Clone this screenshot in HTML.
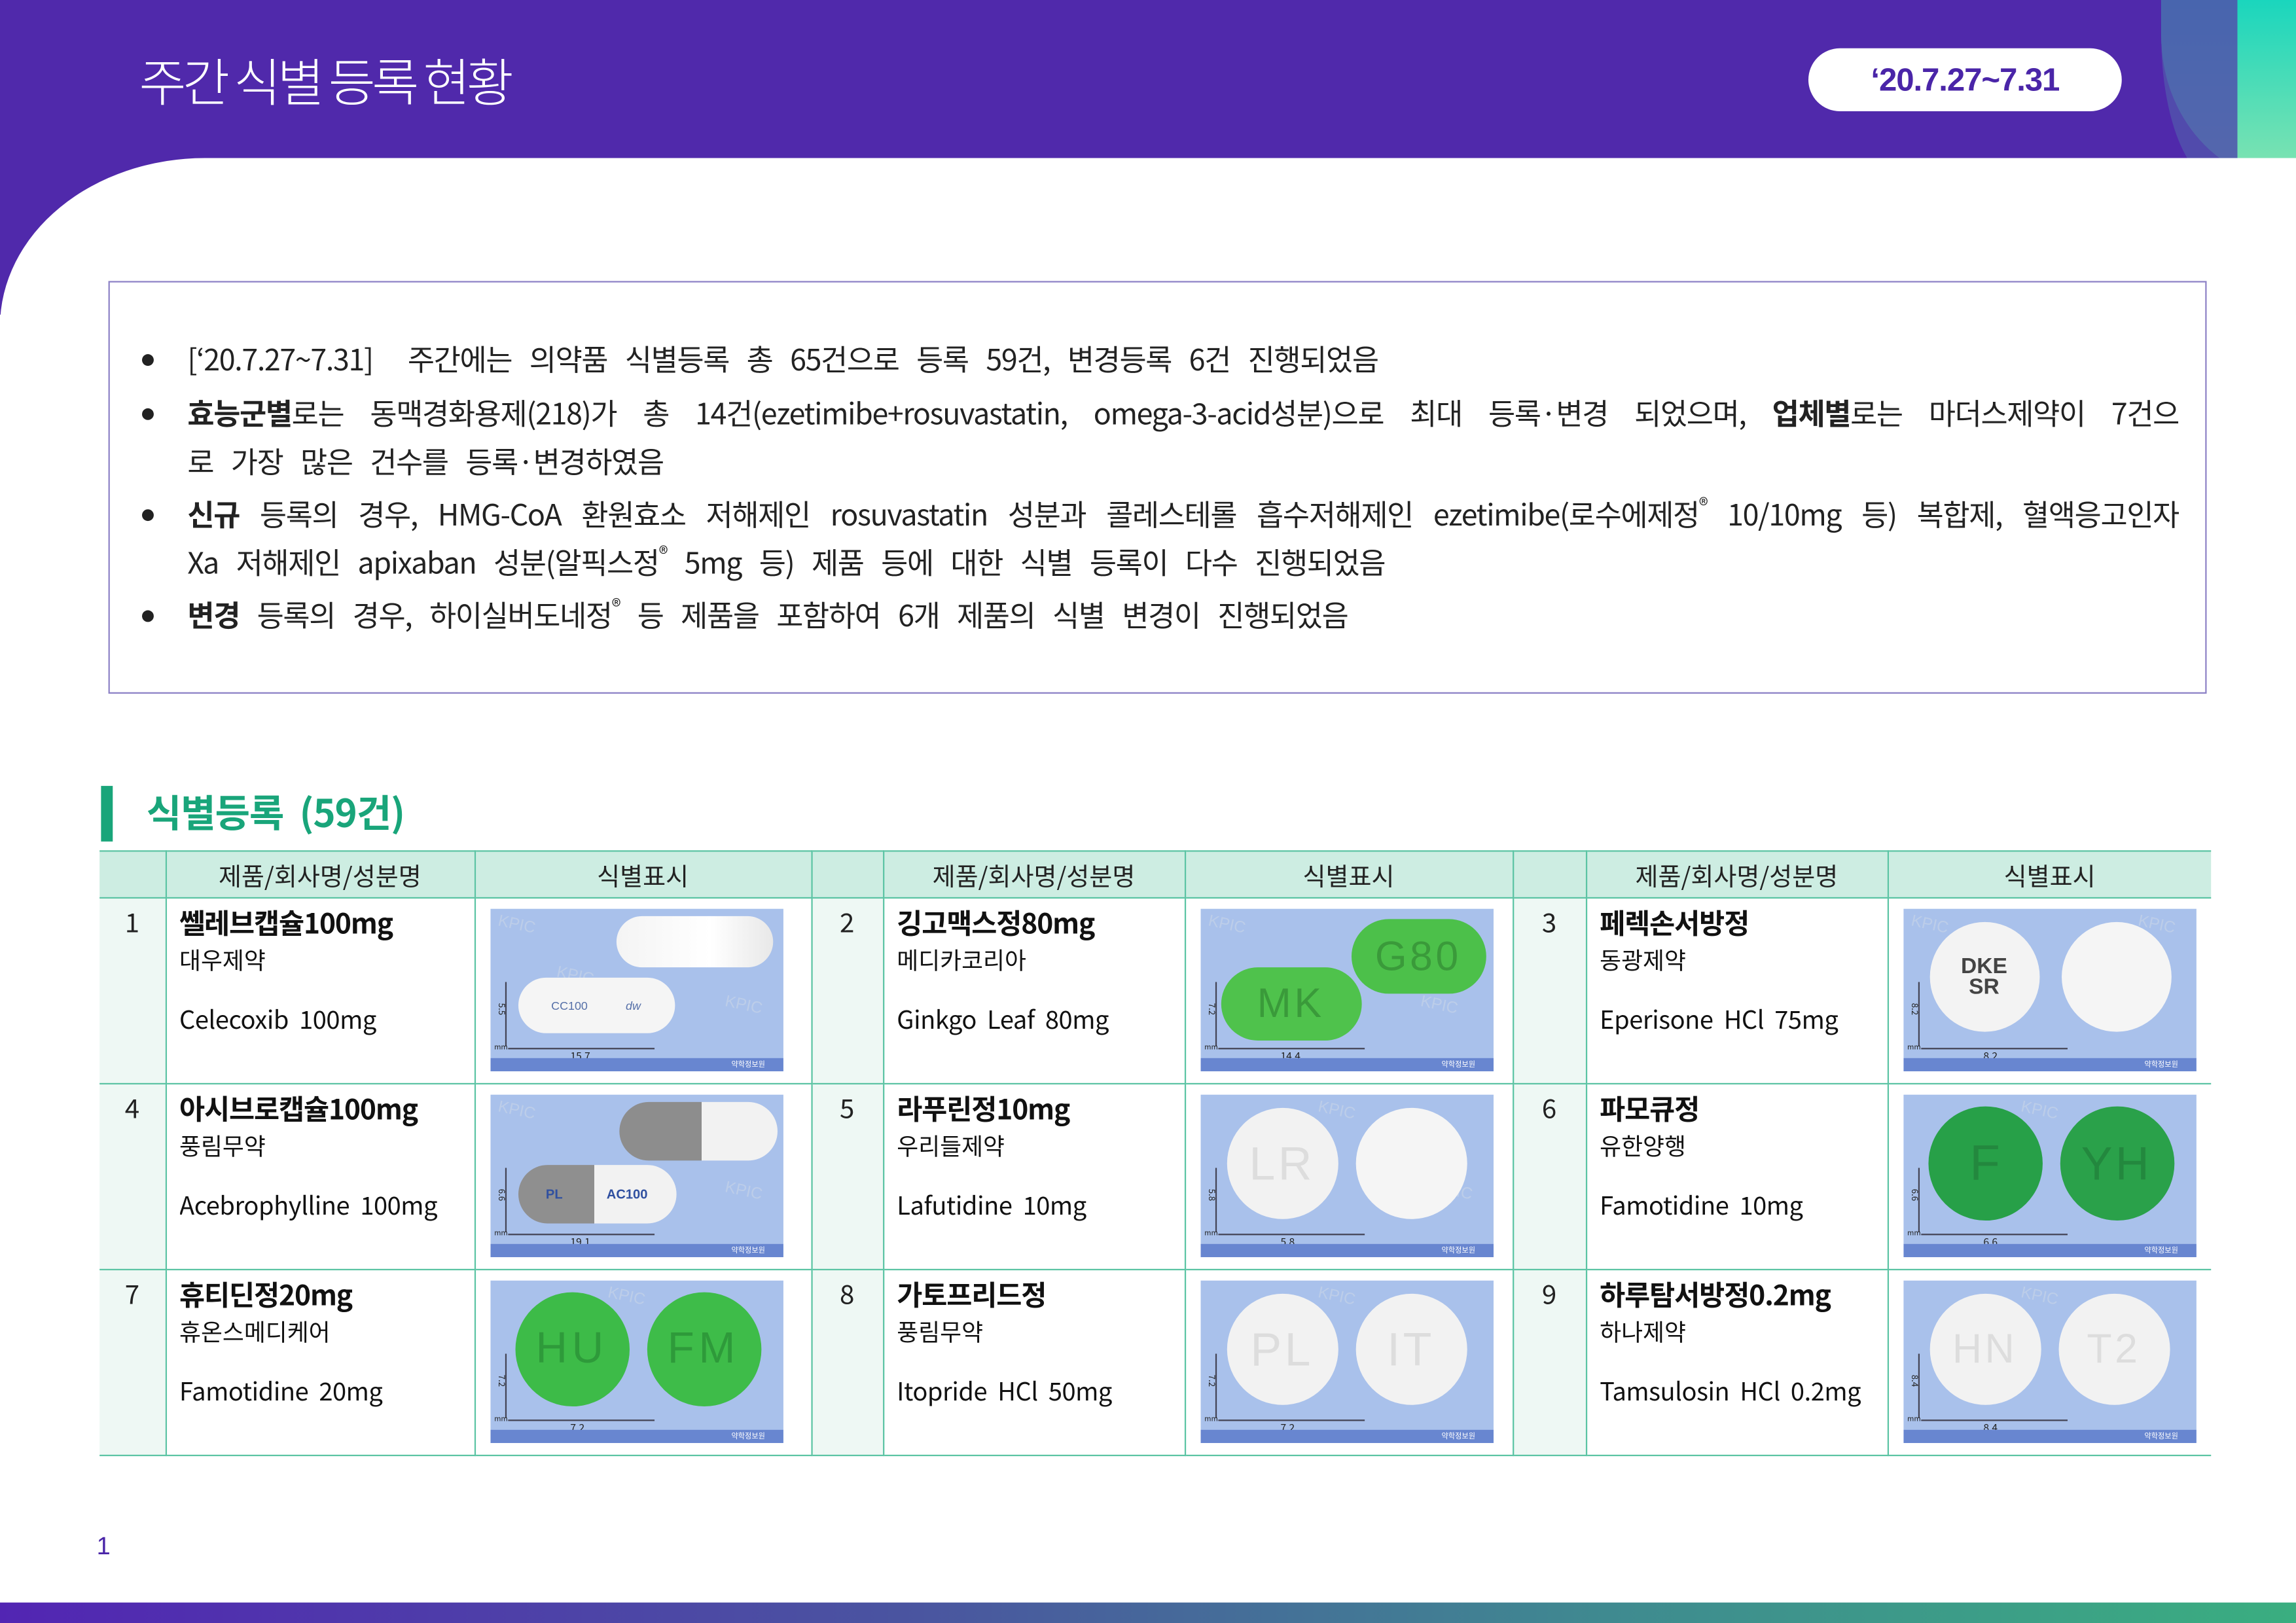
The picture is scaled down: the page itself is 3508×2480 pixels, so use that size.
<!DOCTYPE html>
<html><head><meta charset="utf-8">
<style>
html,body{margin:0;padding:0;background:#fff;}
body{width:3508px;height:2480px;overflow:hidden;position:relative;font-family:"Liberation Sans","Noto Sans CJK KR",sans-serif;}
#w{position:absolute;left:0;top:0;width:1568px;height:1109px;transform:scale(2.23724,2.23626);transform-origin:0 0;overflow:hidden;}
.a{position:absolute;}
.hdr{left:0;top:0;width:1568px;height:215px;background:#5029ab;}
.wh{left:0;top:108px;width:1568px;height:1001px;background:#fff;border-top-left-radius:140px 115px;}
.title{left:95px;top:29px;color:#fff;font-size:35px;font-weight:300;letter-spacing:-2.5px;font-family:"Noto Sans CJK KR",sans-serif;}
.pill{left:1235px;top:33px;width:214px;height:43px;background:#fff;border-radius:22px;color:#4a25a8;font-weight:bold;font-size:22px;text-align:center;line-height:43px;letter-spacing:-0.5px;}
.box{left:74px;top:192px;width:1431px;height:280px;border:1px solid #8d82c6;}
.b{position:absolute;left:128px;width:1360px;font-size:20px;color:#222;letter-spacing:-0.6px;word-spacing:8px;white-space:nowrap;font-family:"Noto Sans CJK KR",sans-serif;line-height:30px;}
.j{text-align:justify;text-align-last:justify;white-space:normal;word-spacing:0;}
.dot{position:absolute;left:97px;width:8px;height:8px;border-radius:50%;background:#222;}
sup{font-size:13px;vertical-align:9px;line-height:0;}
.sec{left:100px;top:536px;color:#19a57a;font-size:26px;font-weight:bold;font-family:"Noto Sans CJK KR",sans-serif;letter-spacing:-0.5px;}
table{position:absolute;left:68px;top:581px;border-collapse:collapse;font-family:"Noto Sans CJK KR",sans-serif;table-layout:fixed;}
td,th{border:1.5px solid #5cc4a4;padding:0;vertical-align:top;}
tr td:first-child,tr th:first-child{border-left:none;}
tr td:last-child,tr th:last-child{border-right:none;}
th{background:#cdede2;font-weight:normal;font-size:17px;color:#222;height:31px;line-height:31px;}
.cell{height:126px;overflow:hidden;position:relative;}
td.n{background:#eef8f4;text-align:center;font-size:18px;color:#222;}
td.n .cell{padding-top:4px;height:122px;line-height:24px;}
td.t{padding-left:9px;color:#111;}
td.t b{display:block;font-size:19px;margin-top:4px;letter-spacing:-0.5px;line-height:26px;}
td.t .c{display:block;font-size:16px;line-height:22px;}
td.t .g{display:block;font-size:17px;margin-top:18px;letter-spacing:-0.2px;line-height:24px;}
.im{position:relative;margin:7px 0 0 10px;width:200px;height:111px;background:#a9c1eb;overflow:hidden;}
.im .band{position:absolute;left:0;bottom:0;width:200px;height:9px;background:#6886d0;}
.im .band span{position:absolute;right:12px;top:0;font-size:5px;color:#fff;line-height:9px;}
.im .wm{position:absolute;font-size:11px;color:#bccde9;transform:rotate(12deg);font-family:"Liberation Sans",sans-serif;}
.im .vl{position:absolute;left:10px;top:50px;width:1px;height:44px;background:#445;}
.im .hl{position:absolute;left:12px;top:95px;width:100px;height:1px;background:#445;}
.im .mm{position:absolute;left:3px;top:91px;font-size:5px;color:#222;}
.im .dm{position:absolute;left:55px;top:96px;font-size:7px;color:#222;}
.im .dv{position:absolute;left:4px;top:64px;font-size:6px;color:#222;transform:rotate(90deg);}
.p{position:absolute;display:flex;align-items:center;justify-content:center;font-family:"Liberation Sans",sans-serif;}
.foot{left:0;top:1095px;width:1568px;height:14px;background:linear-gradient(90deg,#5225b3,#4a55a0 40%,#3f8a90 70%,#3aae80);}
</style></head><body><div id="w">
<div class="a hdr"></div>
<div class="a" style="left:1476px;top:0;width:92px;height:125px;background:linear-gradient(180deg,#16d6bd,#72e0b5);border-bottom-left-radius:90px 100px;"></div>
<div class="a" style="left:1476px;top:0;width:52px;height:125px;background:#5151ab;border-bottom-left-radius:40px 100px;opacity:.85"></div>
<div class="a" style="left:1528px;top:0;width:40px;height:108px;background:linear-gradient(180deg,#1ad6bd,#78e2b2);"></div>
<div class="a wh"></div>
<div class="a title">주간 식별 등록 현황</div>
<div class="a pill">‘20.7.27~7.31</div>
<div class="a box"></div>
<div class="dot" style="top:242px"></div>
<div class="b" style="top:230px">[‘20.7.27~7.31] &nbsp;주간에는 의약품 식별등록 총 65건으로 등록 59건, 변경등록 6건 진행되었음</div>
<div class="dot" style="top:279px"></div>
<div class="b j" style="top:267px;height:30px;overflow:hidden"><b>효능군별</b>로는 동맥경화용제(218)가 총 14건(ezetimibe+rosuvastatin, omega-3-acid성분)으로 최대 등록·변경 되었으며, <b>업체별</b>로는 마더스제약이 7건으</div>
<div class="b" style="top:300px">로 가장 많은 건수를 등록·변경하였음</div>
<div class="dot" style="top:348px"></div>
<div class="b j" style="top:336px;height:30px;overflow:hidden"><b>신규</b> 등록의 경우, HMG-CoA 환원효소 저해제인 rosuvastatin 성분과 콜레스테롤 흡수저해제인 ezetimibe(로수에제정<sup>®</sup> 10/10mg 등) 복합제, 혈액응고인자</div>
<div class="b" style="top:369px">Xa 저해제인 apixaban 성분(알픽스정<sup>®</sup> 5mg 등) 제품 등에 대한 식별 등록이 다수 진행되었음</div>
<div class="dot" style="top:417px"></div>
<div class="b" style="top:405px"><b>변경</b> 등록의 경우, 하이실버도네정<sup>®</sup> 등 제품을 포함하여 6개 제품의 식별 변경이 진행되었음</div>
<div class="a" style="left:69px;top:537px;width:8px;height:38px;background:#19a57a"></div>
<div class="a sec">식별등록 &nbsp;(59건)</div>
<table>
<colgroup><col style="width:45px"><col style="width:211px"><col style="width:230px"><col style="width:49px"><col style="width:206px"><col style="width:224px"><col style="width:50px"><col style="width:206px"><col style="width:221px"></colgroup>
<tr><th></th><th>제품/회사명/성분명</th><th>식별표시</th><th></th><th>제품/회사명/성분명</th><th>식별표시</th><th></th><th>제품/회사명/성분명</th><th>식별표시</th></tr>
<tr>
<td class="n"><div class="cell">1</div></td><td class="t"><div class="cell"><b>쎌레브캡슐100mg</b><span class="c">대우제약</span><span class="g">Celecoxib &nbsp;100mg</span></div></td>
<td><div class="cell"><div class="im"><span class="wm" style="left:5px;top:5px">KPIC</span><span class="wm" style="left:45px;top:40px">KPIC</span><span class="wm" style="left:160px;top:60px">KPIC</span>
<div class="p" style="left:86px;top:5px;width:107px;height:35px;border-radius:18px;background:linear-gradient(90deg,#f4f4f4,#fff 60%,#e8e8e8)"></div>
<div class="p" style="left:19px;top:47px;width:107px;height:38px;border-radius:19px;background:#f5f5f5;font-size:8px;color:#5670a8;gap:26px">CC100<i>dw</i></div>
<div class="vl"></div><div class="hl"></div><span class="mm">mm</span><span class="dm">15.7</span><span class="dv">5.5</span><div class="band"><span>약학정보원</span></div></div></div></td>
<td class="n"><div class="cell">2</div></td><td class="t"><div class="cell"><b>깅고맥스정80mg</b><span class="c">메디카코리아</span><span class="g">Ginkgo &nbsp;Leaf &nbsp;80mg</span></div></td>
<td><div class="cell"><div class="im"><span class="wm" style="left:5px;top:5px">KPIC</span><span class="wm" style="left:150px;top:60px">KPIC</span>
<div class="p" style="left:103px;top:7px;width:92px;height:51px;border-radius:26px;background:#4cc04a;font-size:28px;color:#3a9a3a;letter-spacing:2px">G80</div>
<div class="p" style="left:14px;top:40px;width:96px;height:50px;border-radius:25px;background:#4fc24c;font-size:28px;color:#3a9a3a;letter-spacing:2px">MK</div>
<div class="vl"></div><div class="hl"></div><span class="mm">mm</span><span class="dm">14.4</span><span class="dv">7.2</span><div class="band"><span>약학정보원</span></div></div></div></td>
<td class="n"><div class="cell">3</div></td><td class="t"><div class="cell"><b>페렉손서방정</b><span class="c">동광제약</span><span class="g">Eperisone &nbsp;HCl &nbsp;75mg</span></div></td>
<td><div class="cell"><div class="im"><span class="wm" style="left:5px;top:5px">KPIC</span><span class="wm" style="left:160px;top:5px">KPIC</span>
<div class="p" style="left:18px;top:9px;width:75px;height:75px;border-radius:50%;background:#f3f3f3;font-size:15px;font-weight:bold;color:#444;line-height:14px;text-align:center">DKE<br>SR</div>
<div class="p" style="left:108px;top:9px;width:75px;height:75px;border-radius:50%;background:#f5f5f5"></div>
<div class="vl"></div><div class="hl"></div><span class="mm">mm</span><span class="dm">8.2</span><span class="dv">8.2</span><div class="band"><span>약학정보원</span></div></div></div></td>
</tr>
<tr>
<td class="n"><div class="cell">4</div></td><td class="t"><div class="cell"><b>아시브로캡슐100mg</b><span class="c">풍림무약</span><span class="g">Acebrophylline &nbsp;100mg</span></div></td>
<td><div class="cell"><div class="im"><span class="wm" style="left:5px;top:5px">KPIC</span><span class="wm" style="left:160px;top:60px">KPIC</span>
<div class="p" style="left:88px;top:5px;width:108px;height:40px;border-radius:20px;background:linear-gradient(90deg,#8d8d8d 0 52%,#f2f2f2 52%)"></div>
<div class="p" style="left:19px;top:48px;width:108px;height:40px;border-radius:20px;background:linear-gradient(90deg,#8f8f8f 0 48%,#f2f2f2 48%);font-size:9px;color:#3050a0;gap:30px;font-weight:bold">PL<span>AC100</span></div>
<div class="vl"></div><div class="hl"></div><span class="mm">mm</span><span class="dm">19.1</span><span class="dv">6.6</span><div class="band"><span>약학정보원</span></div></div></div></td>
<td class="n"><div class="cell">5</div></td><td class="t"><div class="cell"><b>라푸린정10mg</b><span class="c">우리들제약</span><span class="g">Lafutidine &nbsp;10mg</span></div></td>
<td><div class="cell"><div class="im"><span class="wm" style="left:80px;top:5px">KPIC</span><span class="wm" style="left:160px;top:60px">KPIC</span>
<div class="p" style="left:18px;top:9px;width:76px;height:76px;border-radius:50%;background:#f2f2f2;font-size:32px;color:#ddd;letter-spacing:2px">LR</div>
<div class="p" style="left:106px;top:9px;width:76px;height:76px;border-radius:50%;background:#f5f5f5"></div>
<div class="vl"></div><div class="hl"></div><span class="mm">mm</span><span class="dm">5.8</span><span class="dv">5.8</span><div class="band"><span>약학정보원</span></div></div></div></td>
<td class="n"><div class="cell">6</div></td><td class="t"><div class="cell"><b>파모큐정</b><span class="c">유한양행</span><span class="g">Famotidine &nbsp;10mg</span></div></td>
<td><div class="cell"><div class="im"><span class="wm" style="left:80px;top:5px">KPIC</span>
<div class="p" style="left:17px;top:8px;width:78px;height:78px;border-radius:50%;background:#27a048;font-size:34px;color:#23883e">F</div>
<div class="p" style="left:107px;top:8px;width:78px;height:78px;border-radius:50%;background:#2aa14a;font-size:32px;color:#23883e;letter-spacing:2px">YH</div>
<div class="vl"></div><div class="hl"></div><span class="mm">mm</span><span class="dm">6.6</span><span class="dv">6.6</span><div class="band"><span>약학정보원</span></div></div></div></td>
</tr>
<tr>
<td class="n"><div class="cell">7</div></td><td class="t"><div class="cell"><b>휴티딘정20mg</b><span class="c">휴온스메디케어</span><span class="g">Famotidine &nbsp;20mg</span></div></td>
<td><div class="cell"><div class="im"><span class="wm" style="left:80px;top:5px">KPIC</span>
<div class="p" style="left:17px;top:8px;width:78px;height:78px;border-radius:50%;background:#3dbb48;font-size:30px;color:#2e9a3a;letter-spacing:3px">HU</div>
<div class="p" style="left:107px;top:8px;width:78px;height:78px;border-radius:50%;background:#3ebc49;font-size:30px;color:#2e9a3a;letter-spacing:3px">FM</div>
<div class="vl"></div><div class="hl"></div><span class="mm">mm</span><span class="dm">7.2</span><span class="dv">7.2</span><div class="band"><span>약학정보원</span></div></div></div></td>
<td class="n"><div class="cell">8</div></td><td class="t"><div class="cell"><b>가토프리드정</b><span class="c">풍림무약</span><span class="g">Itopride &nbsp;HCl &nbsp;50mg</span></div></td>
<td><div class="cell"><div class="im"><span class="wm" style="left:80px;top:5px">KPIC</span>
<div class="p" style="left:18px;top:9px;width:76px;height:76px;border-radius:50%;background:#f2f2f2;font-size:32px;color:#ddd;letter-spacing:2px">PL</div>
<div class="p" style="left:106px;top:9px;width:76px;height:76px;border-radius:50%;background:#f2f2f2;font-size:32px;color:#ddd;letter-spacing:2px">IT</div>
<div class="vl"></div><div class="hl"></div><span class="mm">mm</span><span class="dm">7.2</span><span class="dv">7.2</span><div class="band"><span>약학정보원</span></div></div></div></td>
<td class="n"><div class="cell">9</div></td><td class="t"><div class="cell"><b>하루탐서방정0.2mg</b><span class="c">하나제약</span><span class="g">Tamsulosin &nbsp;HCl &nbsp;0.2mg</span></div></td>
<td><div class="cell"><div class="im"><span class="wm" style="left:80px;top:5px">KPIC</span>
<div class="p" style="left:18px;top:9px;width:76px;height:76px;border-radius:50%;background:#f2f2f2;font-size:28px;color:#ddd;letter-spacing:2px">HN</div>
<div class="p" style="left:106px;top:9px;width:76px;height:76px;border-radius:50%;background:#f2f2f2;font-size:28px;color:#ddd;letter-spacing:2px">T2</div>
<div class="vl"></div><div class="hl"></div><span class="mm">mm</span><span class="dm">8.4</span><span class="dv">8.4</span><div class="band"><span>약학정보원</span></div></div></div></td>
</tr>
</table>
<div class="a" style="left:66px;top:1047px;font-size:17px;color:#4a25a8;">1</div>
<div class="a foot"></div>
</div></body></html>
